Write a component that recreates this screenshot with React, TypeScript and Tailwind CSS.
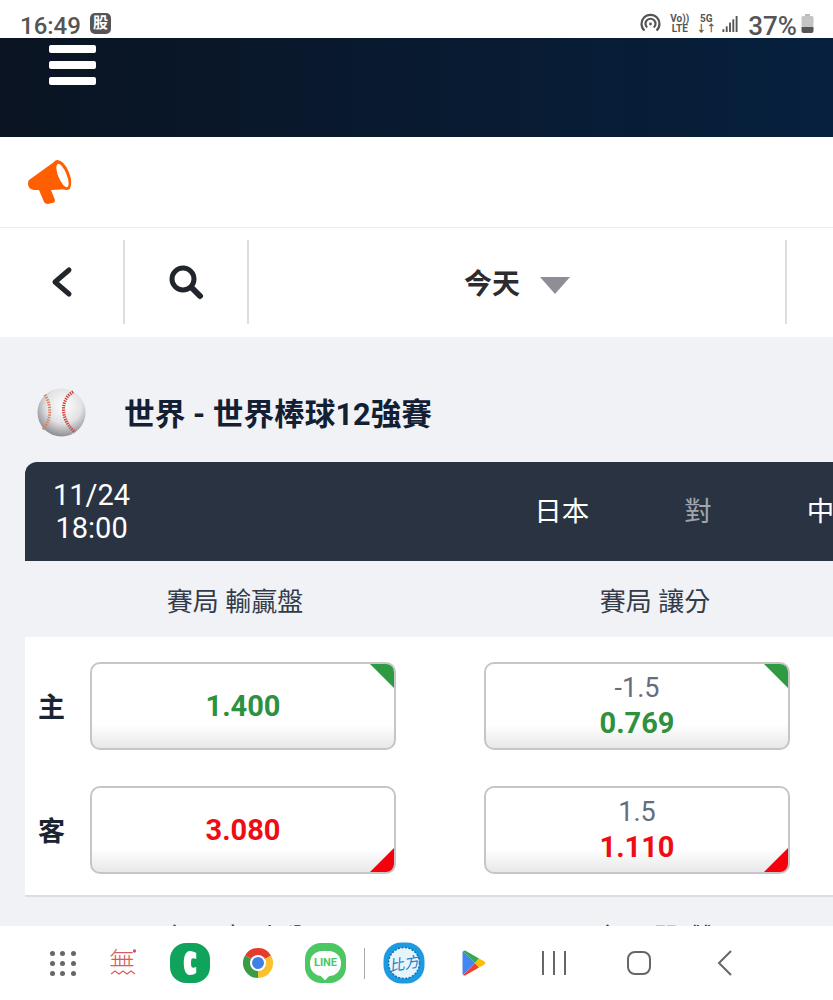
const cjk = "font-['Roboto','Noto_Sans_CJK_TC','Noto_Sans',sans-serif]";

function Megaphone() {
  return (
    <svg width="46" height="46" viewBox="0 0 46 46">
      <path d="M2 21 L27 3 L43 30 L24 31 L28 41 Q28 44 25 44 L21 45 Q18 45 17 43 L12 31 L7 31 Q1 30 1 25 Q1 22 2 21Z" fill="#ff5f00" />
      <ellipse cx="35" cy="16" rx="7.5" ry="16" transform="rotate(-22 35 16)" fill="#ff5f00" />
      <ellipse cx="35.5" cy="16.5" rx="4.2" ry="12.5" transform="rotate(-22 35.5 16.5)" fill="#fff" />
    </svg>
  );
}

function Baseball() {
  return (
    <svg width="49" height="49" viewBox="0 0 50 50">
      <defs>
        <radialGradient id="bb" cx="55%" cy="35%" r="68%">
          <stop offset="0%" stopColor="#ffffff" />
          <stop offset="55%" stopColor="#e2e2e4" />
          <stop offset="100%" stopColor="#85858a" />
        </radialGradient>
      </defs>
      <circle cx="25" cy="25" r="24.5" fill="url(#bb)" />
      <path d="M37 4 C 23 11, 24 34, 39 45" fill="none" stroke="#c9463f" strokeWidth="3.2" strokeDasharray="1.4 1" />
      <path d="M8 7 C 15 18, 15 32, 6 42" fill="none" stroke="#dc7c58" strokeWidth="3" strokeDasharray="1.4 1.2" />
    </svg>
  );
}

function Odd({ line, value, tone }: { line?: string; value: string; tone: "up" | "down" }) {
  const up = tone === "up";
  return (
    <div className="relative flex h-[88px] w-[306px] flex-col items-center justify-center overflow-hidden rounded-[10px] border-2 border-[#c6c6c6] bg-gradient-to-b from-white from-72% to-[#e8e8e8]">
      {line && <div className="text-[27px] leading-[35px] text-[#666d7e]">{line}</div>}
      <div className={`text-[29px] font-bold leading-[35px] ${up ? "text-[#2e9140]" : "text-[#ee0d14]"}`}>{value}</div>
      {up ? (
        <div className="absolute right-0 top-0 h-6 w-6 bg-[#2e9a42] [clip-path:polygon(0_0,100%_0,100%_100%)]" />
      ) : (
        <div className="absolute bottom-0 right-0 h-6 w-6 bg-[#f5000c] [clip-path:polygon(100%_0,100%_100%,0_100%)]" />
      )}
    </div>
  );
}

function OddsRow({ side, a, b }: { side: string; a: { value: string; tone: "up" | "down" }; b: { line: string; value: string; tone: "up" | "down" } }) {
  return (
    <div className="flex items-center">
      <div className="mt-[5px] w-[65px] pl-[13px] text-[27px] font-bold leading-none text-[#1a2433]">{side}</div>
      <Odd value={a.value} tone={a.tone} />
      <div className="ml-[88px]">
        <Odd line={b.line} value={b.value} tone={b.tone} />
      </div>
    </div>
  );
}

function MarketLabels({ a, b }: { a: string; b: string }) {
  return (
    <div className="flex h-[76px] items-center pt-[6px] text-[26px] text-[#333b49]">
      <div className="w-[420px] shrink-0 text-center">{a}</div>
      <div className="w-[420px] shrink-0 text-center">{b}</div>
    </div>
  );
}

function StatusBar() {
  return (
    <div className="flex h-[38px] items-end justify-between bg-white pl-5 pr-[19px] text-[#555]">
      <div className="flex items-end">
        <span className="text-[24px] font-medium leading-[24px]">16:49</span>
        <span className="mb-[4px] ml-[9px] flex h-[21px] w-[21px] items-center justify-center rounded-[5px] bg-[#555] text-[15px] font-bold leading-none text-white">股</span>
      </div>
      <div className="flex items-end">
        <svg width="21" height="21" viewBox="0 0 21 21" className="mb-[4px]" fill="none" stroke="#555" strokeWidth="2.2">
          <path d="M4.5 17.5 A9 9 0 1 1 16.5 17.5" />
          <path d="M7.2 14.5 A5 5 0 1 1 13.8 14.5" />
          <circle cx="10.5" cy="11" r="1.4" fill="#555" stroke="none" />
        </svg>
        <div className="mb-[4px] ml-2 flex w-[21px] flex-col items-center text-[10px] font-bold leading-[10px]">
          <span>Vo))</span>
          <span>LTE</span>
        </div>
        <div className="mb-[4px] ml-2 flex w-[16px] flex-col items-center text-[10px] font-bold leading-[10px]">
          <span>5G</span>
          <span>↓↑</span>
        </div>
        <svg width="16" height="16" viewBox="0 0 16 17" className="mb-[6px] ml-2" fill="#555">
          <rect x="0" y="14" width="2" height="3" />
          <rect x="3.5" y="11" width="2" height="6" />
          <rect x="7" y="7" width="2" height="10" />
          <rect x="10.5" y="3.5" width="2" height="13.5" />
          <rect x="14" y="0" width="2" height="17" />
        </svg>
        <span className="ml-[10px] text-[26px] font-medium leading-[24px]">37%</span>
        <svg width="13" height="19" viewBox="0 0 13 19" className="mb-[5px] ml-[4px]">
          <rect x="4" y="0" width="5" height="2" fill="#bbb" />
          <rect x="0.5" y="2" width="12" height="11" rx="1.5" fill="#c4c4c4" />
          <path d="M0.5 13 H12.5 V17 Q12.5 19 10.5 19 H2.5 Q0.5 19 0.5 17Z" fill="#555" />
        </svg>
      </div>
    </div>
  );
}

function Dock() {
  return (
    <div className="flex h-[74px] shrink-0 items-center bg-white">
      <div className="ml-[50px] grid w-[26px] grid-cols-3 gap-x-[5px] gap-y-[5px]">
        {[0, 1, 2, 3, 4, 5, 6, 7, 8].map((i) => (
          <span key={i} className="h-[5px] w-[5px] rounded-full bg-[#666]" />
        ))}
      </div>
      <svg width="30" height="30" viewBox="0 0 30 30" className="ml-[33px]">
        <defs>
          <clipPath id="wu">
            <rect x="0" y="0" width="30" height="20" />
          </clipPath>
        </defs>
        <text x="0" y="23" fontSize="26" fill="#d95c5c" clipPath="url(#wu)" fontFamily="Noto Sans CJK TC" fontWeight="300">無</text>
        <circle cx="25.5" cy="3" r="1.7" fill="#e05050" />
        <path d="M2 26 L6 23 L10 26 L14 23 L18 26 L22 23 L26 26" fill="none" stroke="#d95c5c" strokeWidth="1.1" />
      </svg>
      <div className="ml-[31px] flex h-10 w-10 items-center justify-center rounded-[16px] bg-[#0fa35c]">
        <svg width="14" height="26" viewBox="0 0 18 26" preserveAspectRatio="none">
          <path d="M9 1 C3 1 1 7 1 13 C1 19 3 25 9 25 C12 25 15 24 17 23 L17 17 C14 18 12 18 11 17 C10 15 10 11 11 9 C12 8 14 8 17 9 L17 3 C15 2 12 1 9 1Z" fill="#fff" />
        </svg>
      </div>
      <svg width="30" height="30" viewBox="0 0 30 30" className="ml-[33px]">
        <path d="M2 7.5 A15 15 0 0 1 28 7.5 L15 15Z" fill="#e33b2e" />
        <path d="M28 7.5 A15 15 0 0 1 15 30 L15 15Z" fill="#fbc02d" />
        <path d="M15 30 A15 15 0 0 1 2 7.5 L15 15Z" fill="#3b9a46" />
        <circle cx="15" cy="15" r="8" fill="#fff" />
        <circle cx="15" cy="15" r="6" fill="#3f7fe8" />
      </svg>
      <div className="relative ml-[32px] flex h-10 w-[41px] items-center justify-center rounded-[16px] bg-[#4cc764]">
        <div className="flex h-[25px] w-[31px] items-center justify-center rounded-[12px] bg-white text-[11px] font-bold text-[#4cc764]">LINE</div>
        <div className="absolute bottom-[4px] left-[17px] h-[6px] w-[6px] rotate-45 bg-white" />
      </div>
      <div className="ml-[18px] h-[31px] w-[1px] bg-[#aaa]" />
      <svg width="42" height="42" viewBox="0 0 42 42" className="ml-[18px]">
        <rect x="0.5" y="0.5" width="41" height="41" rx="18" fill="#1e9be0" />
        <circle cx="21" cy="21" r="15.5" fill="#e8f4fb" stroke="#0e74b8" strokeWidth="1.5" strokeDasharray="2 1.5" />
        <text x="21" y="27" textAnchor="middle" fontSize="15" fontStyle="italic" fill="#1b7fc4" fontFamily="Noto Sans CJK TC" transform="rotate(-10 21 21)">比方</text>
      </svg>
      <svg width="24" height="26" viewBox="0 0 24 26" className="ml-[37px]">
        <path d="M1 1 L13 13 L1 25 Q0.5 24 0.5 23 V3 Q0.5 2 1 1Z" fill="#4285f4" />
        <path d="M1 1 Q2.5 0 4 1 L17 8.5 L13 13Z" fill="#34a853" />
        <path d="M1 25 Q2.5 26 4 25 L17 17.5 L13 13Z" fill="#ea4335" />
        <path d="M17 8.5 L22.5 11.5 Q24 13 22.5 14.5 L17 17.5 L13 13Z" fill="#fbbc04" />
      </svg>
      <div className="ml-[56px] flex h-6 w-6 justify-between">
        <span className="h-6 w-[2px] bg-[#666]" />
        <span className="h-6 w-[2px] bg-[#666]" />
        <span className="h-6 w-[2px] bg-[#666]" />
      </div>
      <div className="ml-[61px] h-6 w-6 rounded-[8px] border-2 border-[#666]" />
      <svg width="15" height="26" viewBox="0 0 15 26" className="ml-[66px]" fill="none" stroke="#666" strokeWidth="2">
        <path d="M14 1 L2 13 L14 25" />
      </svg>
    </div>
  );
}

export default function App() {
  return (
    <div className={`flex h-[1000px] w-[833px] flex-col overflow-hidden bg-white ${cjk}`}>
      <StatusBar />
      <div className="flex h-[99px] shrink-0 flex-col gap-[8px] bg-gradient-to-r from-[#0a1422] to-[#06203e] pl-[49px] pt-[7px]">
        <span className="h-[8px] w-[47px] rounded-[2px] bg-white" />
        <span className="h-[8px] w-[47px] rounded-[2px] bg-white" />
        <span className="h-[8px] w-[47px] rounded-[2px] bg-white" />
      </div>
      <div className="flex h-[91px] shrink-0 items-center border-b border-[#ececec] pl-[27px]">
        <Megaphone />
      </div>
      <div className="flex h-[109px] shrink-0 items-center bg-white pb-[1px]">
        <div className="flex h-[84px] w-[125px] items-center justify-center border-r-2 border-[#dedede]">
          <svg width="24" height="32" viewBox="0 0 24 32" fill="none" stroke="#22262c" strokeWidth="5" strokeLinecap="round" strokeLinejoin="round">
            <path d="M19 4 L5 16 L19 28" />
          </svg>
        </div>
        <div className="flex h-[84px] w-[124px] items-center justify-center border-r-2 border-[#dedede]">
          <svg width="36" height="36" viewBox="0 0 36 36" fill="none" stroke="#22262c" strokeWidth="5" strokeLinecap="round">
            <circle cx="15" cy="15" r="11" />
            <path d="M23.5 23.5 L32 32" strokeWidth="6" />
          </svg>
        </div>
        <div className="flex h-[84px] w-[538px] items-center justify-center gap-[20px] border-r-2 border-[#dedede]">
          <span className="pt-[6px] text-[28px] font-bold leading-none text-[#2c2c30]">今天</span>
          <span className="mt-[6px] h-0 w-0 border-x-[15px] border-t-[17px] border-x-transparent border-t-[#8e8e96]" />
        </div>
      </div>
      <div className="min-h-0 flex-1 overflow-hidden bg-[#f0f2f6]">
        <div className="flex items-center pl-[37px] pt-[51px]">
          <Baseball />
          <span className="ml-[38px] whitespace-nowrap pt-[6px] text-[30.7px] font-bold leading-none text-[#132033]">世界 - 世界棒球12強賽</span>
        </div>
        <div className="ml-[25px] mt-[25px] w-[808px]">
          <div className="flex h-[99px] items-center overflow-hidden whitespace-nowrap rounded-tl-xl bg-[#2a3341] pl-[28px] text-white">
            <div className="w-[80px] text-center text-[29px] leading-[33px]">
              11/24
              <br />
              18:00
            </div>
            <div className="ml-[403px] flex gap-[95px] pl-[1px] text-[27.5px] leading-none">
              <span>日本</span>
              <span className="text-[#a0a5ae]">對</span>
              <span>中華台北</span>
            </div>
          </div>
          <MarketLabels a="賽局 輸贏盤" b="賽局 讓分" />
          <div className="flex flex-col gap-[36px] overflow-hidden border-b-2 border-[#dcdde0] bg-white pb-[21px] pt-[25px]">
            <OddsRow side="主" a={{ value: "1.400", tone: "up" }} b={{ line: "-1.5", value: "0.769", tone: "up" }} />
            <OddsRow side="客" a={{ value: "3.080", tone: "down" }} b={{ line: "1.5", value: "1.110", tone: "down" }} />
          </div>
          <MarketLabels a="賽局 大/小分" b="賽局 單/雙" />
        </div>
      </div>
      <Dock />
    </div>
  );
}
